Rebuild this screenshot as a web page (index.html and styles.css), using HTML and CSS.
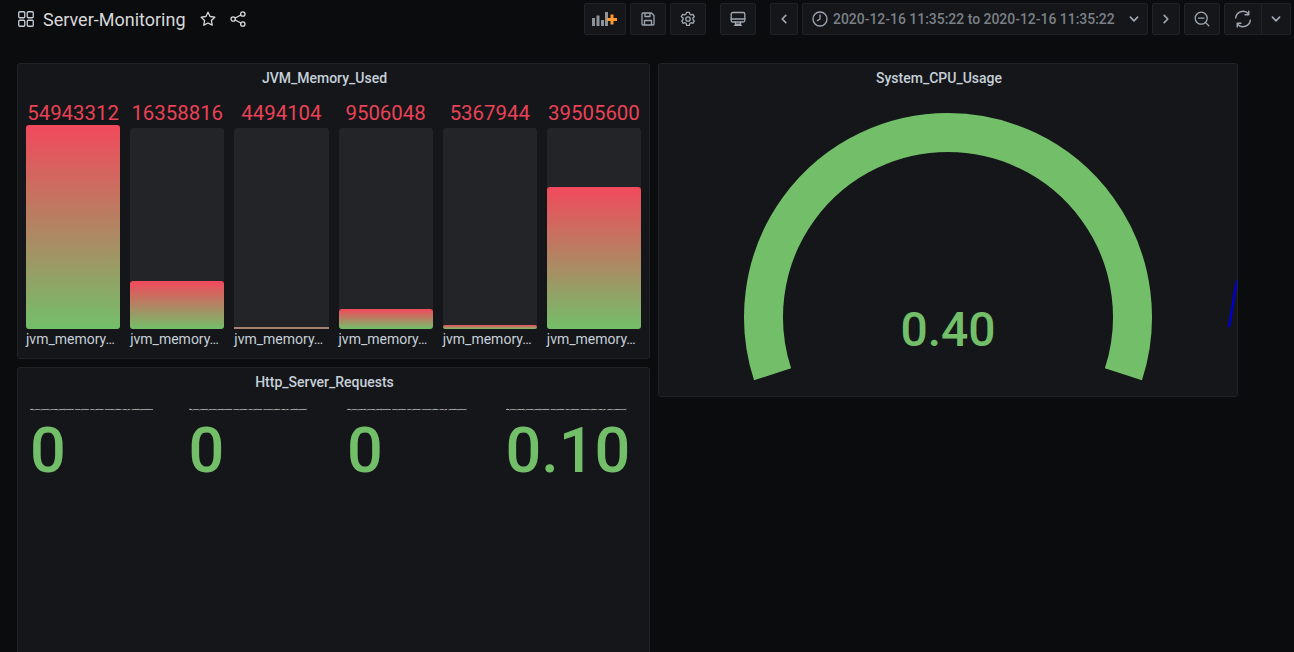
FILE: index.html
```html
<!DOCTYPE html>
<html lang="en">
<head>
<meta charset="utf-8">
<title>Server-Monitoring</title>
<link rel="stylesheet" href="styles.css">
</head>
<body>
<header class="topbar">
  <div class="crumb">
    <svg class="ico grid-ico" viewBox="0 0 16 16"><rect x="0.75" y="0.75" width="6" height="6" rx="1"/><rect x="9.25" y="0.75" width="6" height="6" rx="1"/><rect x="0.75" y="9.25" width="6" height="6" rx="1"/><rect x="9.25" y="9.25" width="6" height="6" rx="1"/></svg>
    <span class="dash-title">Server-Monitoring</span>
    <svg class="ico star" viewBox="0 0 16 16"><path d="M8 1.2l2.1 4.3 4.7.7-3.4 3.3.8 4.7L8 12l-4.2 2.2.8-4.7L1.2 6.2l4.7-.7z"/></svg>
    <svg class="ico share" viewBox="0 0 16 16"><circle cx="12.8" cy="3" r="2.2"/><circle cx="3.2" cy="8" r="2.2"/><circle cx="12.8" cy="13" r="2.2"/><path d="M5.2 7l5.6-3M5.2 9l5.6 3"/></svg>
  </div>
  <div class="tools">
    <button class="btn w42"><svg class="addpanel" viewBox="0 0 26 16"><path class="bars" d="M0 7h3v8H0zM4.5 4.5h3V15h-3zM9 9h3v6H9zM13 1h3v14h-3z"/><path class="plus" d="M20 3.500v10M15 8.500h10"/></svg></button>
    <button class="btn w36"><svg class="ico" viewBox="0 0 16 16"><path d="M2 3a1 1 0 0 1 1-1h8.500L14 4.500V13a1 1 0 0 1-1 1H3a1 1 0 0 1-1-1zM5 2v3.500h5V2M4.500 14V9.500h7V14"/></svg></button>
    <button class="btn w36"><svg class="ico" viewBox="0 0 16 16"><path d="M6.600 1.300h2.800l.4 1.900 1.300.7 1.800-.6 1.400 2.400-1.400 1.300v1.600l1.400 1.300-1.400 2.400-1.800-.6-1.300.7-.4 1.900H6.600l-.4-1.900-1.300-.7-1.800.6-1.400-2.400 1.400-1.300V7.000L1.300 5.700l1.400-2.400 1.800.6 1.300-.7z"/><circle cx="8" cy="8" r="2.200"/></svg></button>
    <button class="btn w36 sep-l"><svg class="ico" viewBox="0 0 16 16"><rect x="1.200" y="1.500" width="13.600" height="9.500" rx="1.500"/><path d="M1.200 8h13.600M5.500 11v2.200h5V11M4.500 14.300h7"/></svg></button>
    <button class="btn w28 sep-l"><svg class="ico small" viewBox="0 0 10 10"><path d="M6.500 2L3.500 5l3 3"/></svg></button>
    <button class="btn range">
      <svg class="ico" viewBox="0 0 16 16"><circle cx="8" cy="8" r="7"/><path d="M8 3.800V8l-2.600 1.600"/></svg>
      <span class="range-text">2020-12-16 11:35:22 to 2020-12-16 11:35:22</span>
      <svg class="ico small caret" viewBox="0 0 10 10"><path d="M2 3.500l3 3 3-3"/></svg>
    </button>
    <button class="btn w28"><svg class="ico small" viewBox="0 0 10 10"><path d="M3.500 2l3 3-3 3"/></svg></button>
    <button class="btn w36"><svg class="ico" viewBox="0 0 16 16"><circle cx="7.200" cy="7.200" r="6"/><path d="M4.500 7.200h5.400M11.600 11.600l3.200 3.200"/></svg></button>
    <div class="split">
      <button class="btn w38 join-r"><svg class="ico refresh" viewBox="0 0 16 16"><path d="M1.500 7a6.500 6.500 0 0 1 11.300-3.600M14.500 9a6.500 6.500 0 0 1-11.300 3.600M9.800 4.300h3.300V1M6.200 11.700H2.900V15"/></svg></button>
      <button class="btn w29 join-l"><svg class="ico small" viewBox="0 0 10 10"><path d="M2 3.500l3 3 3-3"/></svg></button>
    </div>
  </div>
</header>

<main class="dashboard">
  <div class="col-left">
    <section class="panel panel-jvm">
      <h2 class="panel-title">JVM_Memory_Used</h2>
      <div class="bars-row">
        <div class="bar-item"><div class="bar-value">54943312</div><div class="track"><div class="fill" style="height:204px"></div></div><div class="bar-label">jvm_memory…</div></div>
        <div class="bar-item"><div class="bar-value">16358816</div><div class="track"><div class="fill" style="height:48px"></div></div><div class="bar-label">jvm_memory…</div></div>
        <div class="bar-item"><div class="bar-value">4494104</div><div class="track"><div class="fill thin" style="height:2px"></div></div><div class="bar-label">jvm_memory…</div></div>
        <div class="bar-item"><div class="bar-value">9506048</div><div class="track"><div class="fill" style="height:20px"></div></div><div class="bar-label">jvm_memory…</div></div>
        <div class="bar-item"><div class="bar-value">5367944</div><div class="track"><div class="fill" style="height:4px"></div></div><div class="bar-label">jvm_memory…</div></div>
        <div class="bar-item"><div class="bar-value">39505600</div><div class="track"><div class="fill" style="height:142px"></div></div><div class="bar-label">jvm_memory…</div></div>
      </div>
    </section>
    <section class="panel panel-http">
      <h2 class="panel-title">Http_Server_Requests</h2>
      <div class="stats-row">
        <div class="stat"><div class="stat-label">http_server_requests_seconds_count{exception="None",method="GET",outcome="SUCCESS",status="200",uri="/actuator/prometheus"}</div><div class="stat-value">0</div></div>
        <div class="stat"><div class="stat-label">http_server_requests_seconds_count{exception="None",method="GET",outcome="SUCCESS",status="200",uri="/actuator/health"}</div><div class="stat-value">0</div></div>
        <div class="stat"><div class="stat-label">http_server_requests_seconds_count{exception="None",method="GET",outcome="SUCCESS",status="200",uri="/actuator/metrics"}</div><div class="stat-value">0</div></div>
        <div class="stat"><div class="stat-label">http_server_requests_seconds_count{exception="None",method="GET",outcome="SUCCESS",status="200",uri="/api/v1/employees"}</div><div class="stat-value">0.10</div></div>
      </div>
    </section>
  </div>
  <section class="panel panel-cpu">
    <h2 class="panel-title">System_CPU_Usage</h2>
    <div class="gauge-wrap">
      <svg class="gauge" viewBox="0 0 578 302">
        <path class="gauge-arc" d="M113.600 282.300 A 184.500 184.500 0 1 1 464.400 282.300"/>
        <path class="gauge-needle" d="M570 235 L578 188"/>
      </svg>
      <div class="gauge-value">0.40</div>
    </div>
  </section>
</main>
</body>
</html>
```
FILE: styles.css
```css
* { box-sizing: border-box; }
html, body { margin: 0; height: 652px; overflow: hidden; }
body {
  background: #0b0c0e;
  color: #c7d0d9;
  font-family: Roboto, "Liberation Sans", sans-serif;
}
.topbar {
  height: 63px;
  padding: 3px 3px 0 18px;
  display: flex;
  justify-content: space-between;
  align-items: flex-start;
}
.crumb { display: flex; align-items: center; height: 32px; }
.ico {
  width: 16px; height: 16px;
  fill: none; stroke: #9fa7b3; stroke-width: 1.3;
  stroke-linejoin: round; stroke-linecap: round;
  flex: none;
}
.ico.small { width: 12px; height: 12px; stroke-width: 1.4; }
.grid-ico { stroke: #c7d0d9; }
.star { stroke: #d8d9da; margin-left: 14px; }
.share { stroke: #d8d9da; margin-left: 14px; }
.refresh { width: 18px; height: 18px; }
.dash-title { font-size: 18px; color: #d8d9da; margin-left: 9px; }
.tools { display: flex; align-items: center; gap: 4px; }
.btn {
  height: 32px;
  background: #141619;
  border: 1px solid #202226;
  border-radius: 2px;
  padding: 0;
  display: flex; align-items: center; justify-content: center;
  font-family: inherit;
}
.w42 { width: 42px; }
.w36 { width: 36px; }
.w38 { width: 38px; }
.w29 { width: 29px; }
.w28 { width: 28px; }
.sep-l { margin-left: 10px; }
.addpanel { width: 26px; height: 16px; }
.bars { fill: #8e939a; }
.plus { stroke: #ff9830; stroke-width: 3; fill: none; }
.range { width: 346px; padding: 0 7px 0 9px; justify-content: flex-start; }
.range-text { font-size: 13.95px; font-weight: 500; color: #7b8087; margin-left: 5px; white-space: nowrap; }
.caret { margin-left: auto; }
.split { display: flex; }
.join-r { border-radius: 2px 0 0 2px; }
.join-l { border-radius: 0 2px 2px 0; border-left: 0; }

.dashboard {
  display: flex;
  gap: 8px;
  padding-left: 17px;
  align-items: flex-start;
}
.col-left { width: 633px; display: flex; flex-direction: column; gap: 8px; }
.panel {
  background: #141619;
  border: 1px solid #202226;
  border-radius: 3px;
}
.panel-title {
  margin: 0;
  height: 28px;
  line-height: 29px;
  padding-right: 18px;
  font-size: 14px;
  font-weight: 500;
  color: #c7d0d9;
  text-align: center;
}
.panel-jvm { height: 296px; padding: 0 8px; }
.bars-row { display: flex; gap: 10px; padding-top: 9px; }
.bar-item { flex: 1 1 0; min-width: 0; display: flex; flex-direction: column; }
.bar-value {
  height: 27px;
  line-height: 24px;
  font-size: 20.4px;
  color: #ea4257;
  text-align: center;
  white-space: nowrap;
}
.track {
  height: 201px;
  background: #232428;
  border-radius: 3px;
  display: flex; flex-direction: column; justify-content: flex-end;
}
.fill {
  flex: none;
  background: linear-gradient(to bottom, #f2495c, #73bf69);
  border-radius: 3px;
}
.fill.thin { background: #a8826c; border-radius: 0; }
.bar-label { font-size: 14px; line-height: 20px; color: #c7d0d9; white-space: nowrap; }

.panel-http { height: 300px; }
.stats-row { display: grid; grid-template-columns: repeat(4, 158.5px); padding: 11px 0 0 12px; }
.stat-label {
  width: 123px;
  height: 6px;
  font-size: 2.05px;
  line-height: 6px;
  font-weight: 700;
  color: #ffffff;
  white-space: nowrap;
  overflow: hidden;
}
.stat-value {
  font-size: 63px;
  font-weight: 500;
  line-height: 78px;
  color: #73bf69;
  margin-top: -1px;
}

.panel-cpu { width: 580px; height: 334px; }
.gauge-wrap { position: relative; height: 304px; }
.gauge { display: block; width: 578px; height: 302px; }
.gauge-arc { fill: none; stroke: #73bf69; stroke-width: 39; }
.gauge-needle { fill: none; stroke: #0000cc; stroke-width: 2.500; }
.gauge-value {
  position: absolute;
  left: 0; right: 0; top: 208px;
  text-align: center;
  font-size: 48px;
  font-weight: 500;
  line-height: 60px;
  color: #73bf69;
}
```
